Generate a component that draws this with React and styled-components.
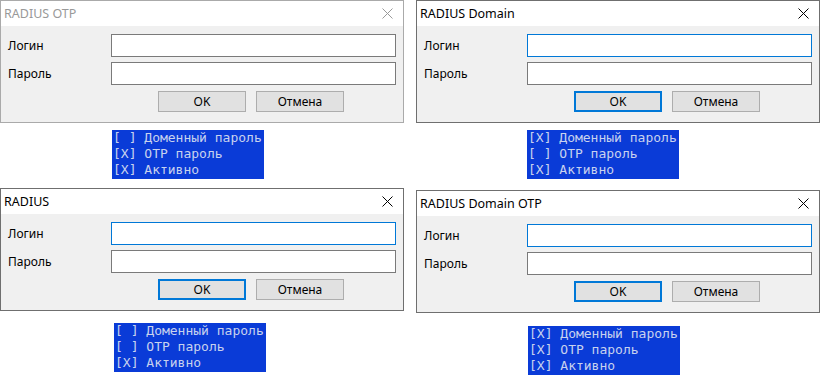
import React from 'react';
import styled, { createGlobalStyle, css } from 'styled-components';

const GlobalStyle = createGlobalStyle`
    html, body {
        margin: 0;
        padding: 0;
        background: #fff;
    }

    body {
        font-family: "Segoe UI", "Noto Sans", "Open Sans", sans-serif;
        font-size: 12px;
        color: #000;
    }
`;

const Page = styled.div`
    display: grid;
    grid-template-columns: 404px 404px;
    column-gap: 12px;
    row-gap: 9px;
    width: 821px;
    height: 382px;
    align-content: start;
`;

const Cell = styled.div`
    display: flex;
    flex-direction: column;
    align-items: flex-start;
    padding-top: ${(p) => p.$top || 0}px;
`;

const Window = styled.div`
    width: 404px;
    height: 123px;
    box-sizing: border-box;
    border: 1px solid ${(p) => (p.$active ? '#6f6f6f' : '#aaaaaa')};
    background: #f0f0f0;
    display: flex;
    flex-direction: column;
`;

const TitleBar = styled.div`
    height: 25px;
    flex: none;
    background: #fff;
    display: flex;
    align-items: center;
    justify-content: space-between;
    padding: 0 10px 0 3px;
    color: ${(p) => (p.$active ? '#000' : '#999')};
    font-size: 12.5px;
`;

const Body = styled.div`
    display: grid;
    grid-template-columns: 103px 285px;
    grid-auto-rows: 23px;
    row-gap: 5px;
    padding: 8px 0 0 7px;
    align-items: center;
`;

const Label = styled.div`
    font-size: 12px;
    color: #000;
`;

const Input = styled.div`
    height: 23px;
    box-sizing: border-box;
    background: #fff;
    border: 1px solid ${(p) => (p.$focus ? '#0078d7' : '#7a7a7a')};
`;

const Buttons = styled.div`
    grid-column: 2;
    display: flex;
    gap: 10px;
    padding-left: 47px;
    margin-top: 1px;
    align-self: start;
`;

const Button = styled.div`
    width: 88px;
    height: 21px;
    box-sizing: border-box;
    background: #e1e1e1;
    border: 1px solid #adadad;
    display: flex;
    align-items: center;
    justify-content: center;
    font-size: 12px;

    ${(p) =>
        p.$default &&
        css`
            border: 2px solid #0078d7;
        `}
`;

const Status = styled.div`
    margin: ${(p) => p.$gap}px 0 0 ${(p) => p.$left}px;
    background: #0a3bd7;
    color: #c8d2ee;
    font-family: "DejaVu Sans Mono", "Liberation Mono", monospace;
    font-size: 13px;
    line-height: 16px;
    white-space: pre;
    padding: 0 2px 1px 1px;
`;

function CloseIcon({ active }) {
    return (
        <svg width="11" height="11" viewBox="0 0 11 11">
            <path d="M0.5 0.5 L10.5 10.5 M10.5 0.5 L0.5 10.5" stroke={active ? '#000' : '#999'} strokeWidth="1" />
        </svg>
    );
}

const dialogs = [
    { title: 'RADIUS OTP', active: false, domain: false, otp: true, top: 0, gap: 7, left: 112 },
    { title: 'RADIUS Domain', active: true, domain: true, otp: false, top: 0, gap: 7, left: 111 },
    { title: 'RADIUS', active: true, domain: false, otp: false, top: 0, gap: 12, left: 114 },
    { title: 'RADIUS Domain OTP', active: true, domain: true, otp: true, top: 2, gap: 13, left: 112 },
];

const mark = (v) => (v ? '[X]' : '[ ]');

function Dialog({ d }) {
    return (
        <Cell $top={d.top}>
            <Window $active={d.active}>
                <TitleBar $active={d.active}>
                    <span>{d.title}</span>
                    <CloseIcon active={d.active} />
                </TitleBar>
                <Body>
                    <Label>Логин</Label>
                    <Input $focus={d.active} />
                    <Label>Пароль</Label>
                    <Input />
                    <Buttons>
                        <Button $default={d.active}>OK</Button>
                        <Button>Отмена</Button>
                    </Buttons>
                </Body>
            </Window>
            <Status $gap={d.gap} $left={d.left}>
                {`${mark(d.domain)} Доменный пароль\n${mark(d.otp)} OTP пароль\n[X] Активно`}
            </Status>
        </Cell>
    );
}

export default function App() {
    return (
        <>
            <GlobalStyle />
            <Page>
                {dialogs.map((d) => (
                    <Dialog key={d.title} d={d} />
                ))}
            </Page>
        </>
    );
}
